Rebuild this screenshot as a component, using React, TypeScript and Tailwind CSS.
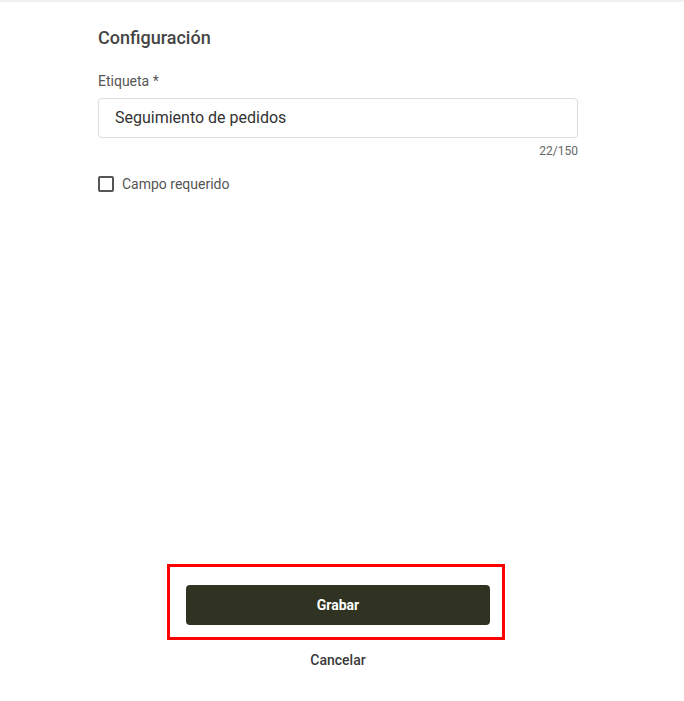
export default function App() {
  return (
    <div className="w-[684px] h-[701px] bg-white flex flex-col" style={{ fontFamily: "Roboto, 'Liberation Sans', sans-serif" }}>
      <div className="h-[2px] bg-[#f0f0f0]" />
      <div className="ml-[98px] w-[480px]">
        <h2 className="mt-[24px] text-[18px] leading-[24px] font-medium text-[#444]">Configuración</h2>
        <label className="block mt-[22px] text-[14px] leading-[18px] text-[#555]">Etiqueta *</label>
        <div className="mt-[8px] h-[40px] border border-[#dcdcdc] rounded-[4px] flex items-center px-[16px] text-[16px] text-[#333]">
          Seguimiento de pedidos
        </div>
        <div className="mt-[6px] text-right text-[12px] leading-[14px] text-[#666]">22/150</div>
        <div className="mt-[17px] flex items-center gap-[8px]">
          <div className="w-[16px] h-[16px] border-2 border-[#555] rounded-[2px]" />
          <span className="text-[14px] leading-[18px] text-[#555]">Campo requerido</span>
        </div>
      </div>
      <div className="flex-1" />
      <div className="ml-[98px] w-[480px] flex flex-col items-center pb-[32px]">
        <div className="self-start ml-[69px] w-[338px] border-[3px] border-[#ff0000] pl-[16px] pr-[12px] pt-[18px] pb-[12px]">
          <button className="w-[304px] h-[40px] bg-[#313322] rounded-[4px] text-white text-[14px] font-bold">Grabar</button>
        </div>
        <button className="mt-[11px] text-[14px] leading-[18px] font-medium text-[#3a3a3a]">Cancelar</button>
      </div>
    </div>
  );
}
